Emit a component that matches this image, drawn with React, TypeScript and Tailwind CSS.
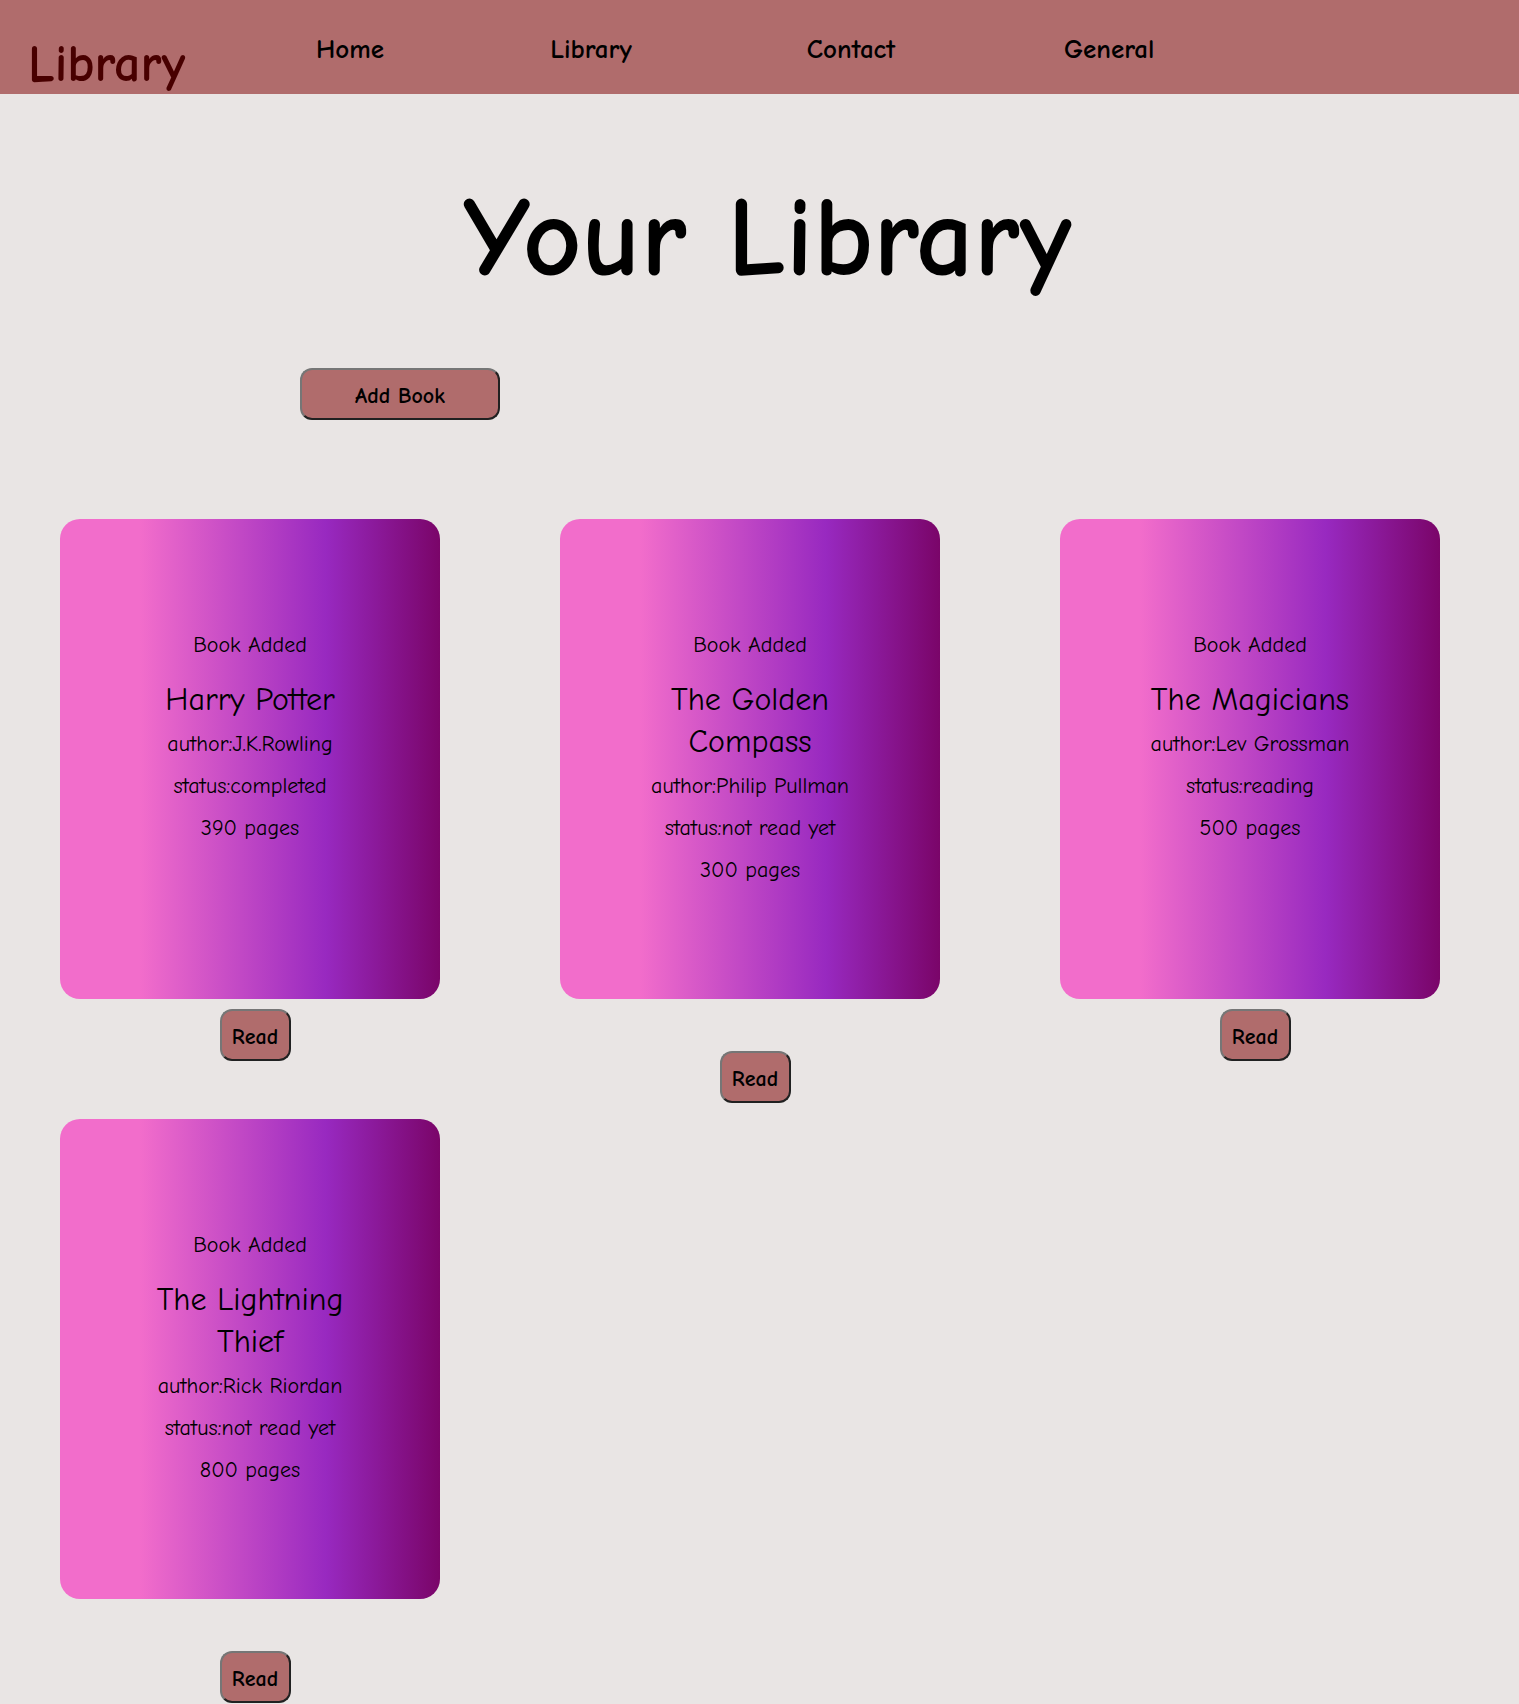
type Book = { title: string; author: string; status: string; pages: number };

const books: Book[] = [
  { title: "Harry Potter", author: "J.K.Rowling", status: "completed", pages: 390 },
  { title: "The Golden Compass", author: "Philip Pullman", status: "not read yet", pages: 300 },
  { title: "The Magicians", author: "Lev Grossman", status: "reading", pages: 500 },
  { title: "The Lightning Thief", author: "Rick Riordan", status: "not read yet", pages: 800 },
];

const buttonStyle =
  "h-[52px] rounded-xl border-2 border-t-[#767676] border-l-[#767676] border-r-[#212121] border-b-[#212121] bg-[#b06c6c] pt-1 text-[22px] font-bold text-black";

function BookCard({ book }: { book: Book }) {
  return (
    <li className="flex h-[480px] w-[380px] flex-col items-center rounded-[20px] bg-[linear-gradient(90deg,#f26dcb_21%,#9829c0_70%,#7a0569_100%)] pt-[105px] text-center text-[22px] leading-[42px] whitespace-nowrap">
      <p>Book Added</p>
      <h2 className="mt-[13px] w-[208px] text-[32px] whitespace-normal">{book.title}</h2>
      <p className="mt-[2px]">author:{book.author}</p>
      <p>status:{book.status}</p>
      <p>{book.pages} pages</p>
      <button type="button" className={`${buttonStyle} mt-40 ml-[10px] w-[71px] shrink-0 leading-6`}>
        Read
      </button>
    </li>
  );
}

export default function App() {
  return (
    <div className="min-h-screen bg-[#e9e5e4] font-['Comic_Sans_MS','Comic_Neue','Open_Sans',sans-serif] text-black">
      <header className="flex h-[94px] items-start bg-[#b06c6c] pl-7">
        <a href="#" className="mt-[31px] w-40 text-[52px] leading-[66px] font-bold text-[#480000]">
          Library
        </a>
        <nav className="mt-[33px] ml-32 flex gap-40 text-center text-[27px] leading-[34px] font-bold">
          <a href="#home" className="w-[68px]">Home</a>
          <a href="#library" className="w-[94px]">Library</a>
          <a href="#contact" className="w-[106px]">Contact</a>
          <a href="#general" className="w-[84px]">General</a>
        </nav>
      </header>
      <main>
        <h1 className="mt-[64px] ml-4 text-center text-[114px] leading-[160px] font-bold">Your Library</h1>
        <button type="button" className={`${buttonStyle} mt-[50px] ml-[300px] block w-[200px]`}>
          Add Book
        </button>
        <ul className="mt-[99px] flex flex-wrap gap-[120px] pl-[60px]">
          {books.map((book) => (
            <BookCard key={book.title} book={book} />
          ))}
        </ul>
      </main>
    </div>
  );
}
